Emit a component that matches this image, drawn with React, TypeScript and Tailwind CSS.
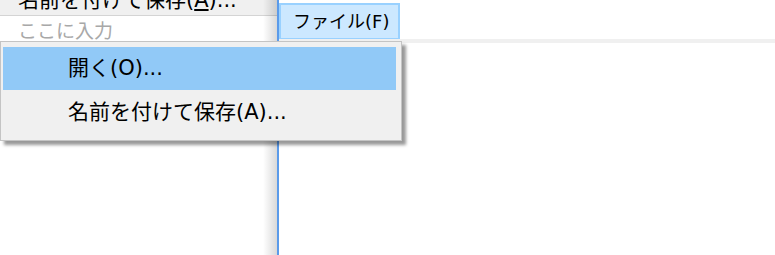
const FONT = "font-['DejaVu_Sans','Noto_Sans_CJK_JP',sans-serif]";

function LeftPane() {
  return (
    <div className="relative w-[277px] h-full bg-white overflow-hidden">
      <div className="h-[16px] bg-[#f0f0f0] overflow-hidden border-b border-[#d4d4d4]">
        <div className="pl-[18px] mt-[-13px] text-[21px] leading-[26px] text-black whitespace-nowrap">
          名前を付けて保存(<span className="underline">A</span>)...
        </div>
      </div>
      <div className="pl-[18px] pt-[2px] text-[19px] leading-[26px] text-[#a8a8a8] whitespace-nowrap">
        ここに入力
      </div>
      {/* soft edge toward the divider */}
      <div className="absolute top-0 right-0 h-full w-[14px] bg-gradient-to-r from-transparent to-black/15 pointer-events-none" />
    </div>
  );
}

function DropMenu() {
  return (
    <div className="absolute left-0 top-[41px] w-[402px] bg-[#f0f0f0] border border-[#c4c4c4] pt-[5px] pb-[4px] pl-[2px] pr-[5px] shadow-[4px_4px_3px_rgba(0,0,0,0.4)]">
      <div className="h-[43px] bg-[#91c9f7] flex items-center pl-[65px] text-[21px] text-black whitespace-nowrap">
        開く(O)...
      </div>
      <div className="h-[46px] flex items-center pl-[65px] text-[21px] text-black whitespace-nowrap">
        名前を付けて保存(A)...
      </div>
    </div>
  );
}

export default function App() {
  return (
    <div className={`relative w-[775px] h-[255px] bg-white overflow-hidden ${FONT}`}>
      <div className="flex h-full">
        <LeftPane />
        <div className="w-[2px] h-full bg-[#5b9bea]" />
        <div className="flex-1 flex flex-col">
          <div className="h-[39px] pt-[3px]">
            <div className="w-[121px] h-[37px] bg-[#cce8ff] border-2 border-[#99d1ff] flex items-center pl-[12px] text-[18px] text-black whitespace-nowrap">
              ファイル(F)
            </div>
          </div>
          <div className="h-[4px] bg-[#f0f0f0]" />
        </div>
      </div>
      <DropMenu />
    </div>
  );
}
